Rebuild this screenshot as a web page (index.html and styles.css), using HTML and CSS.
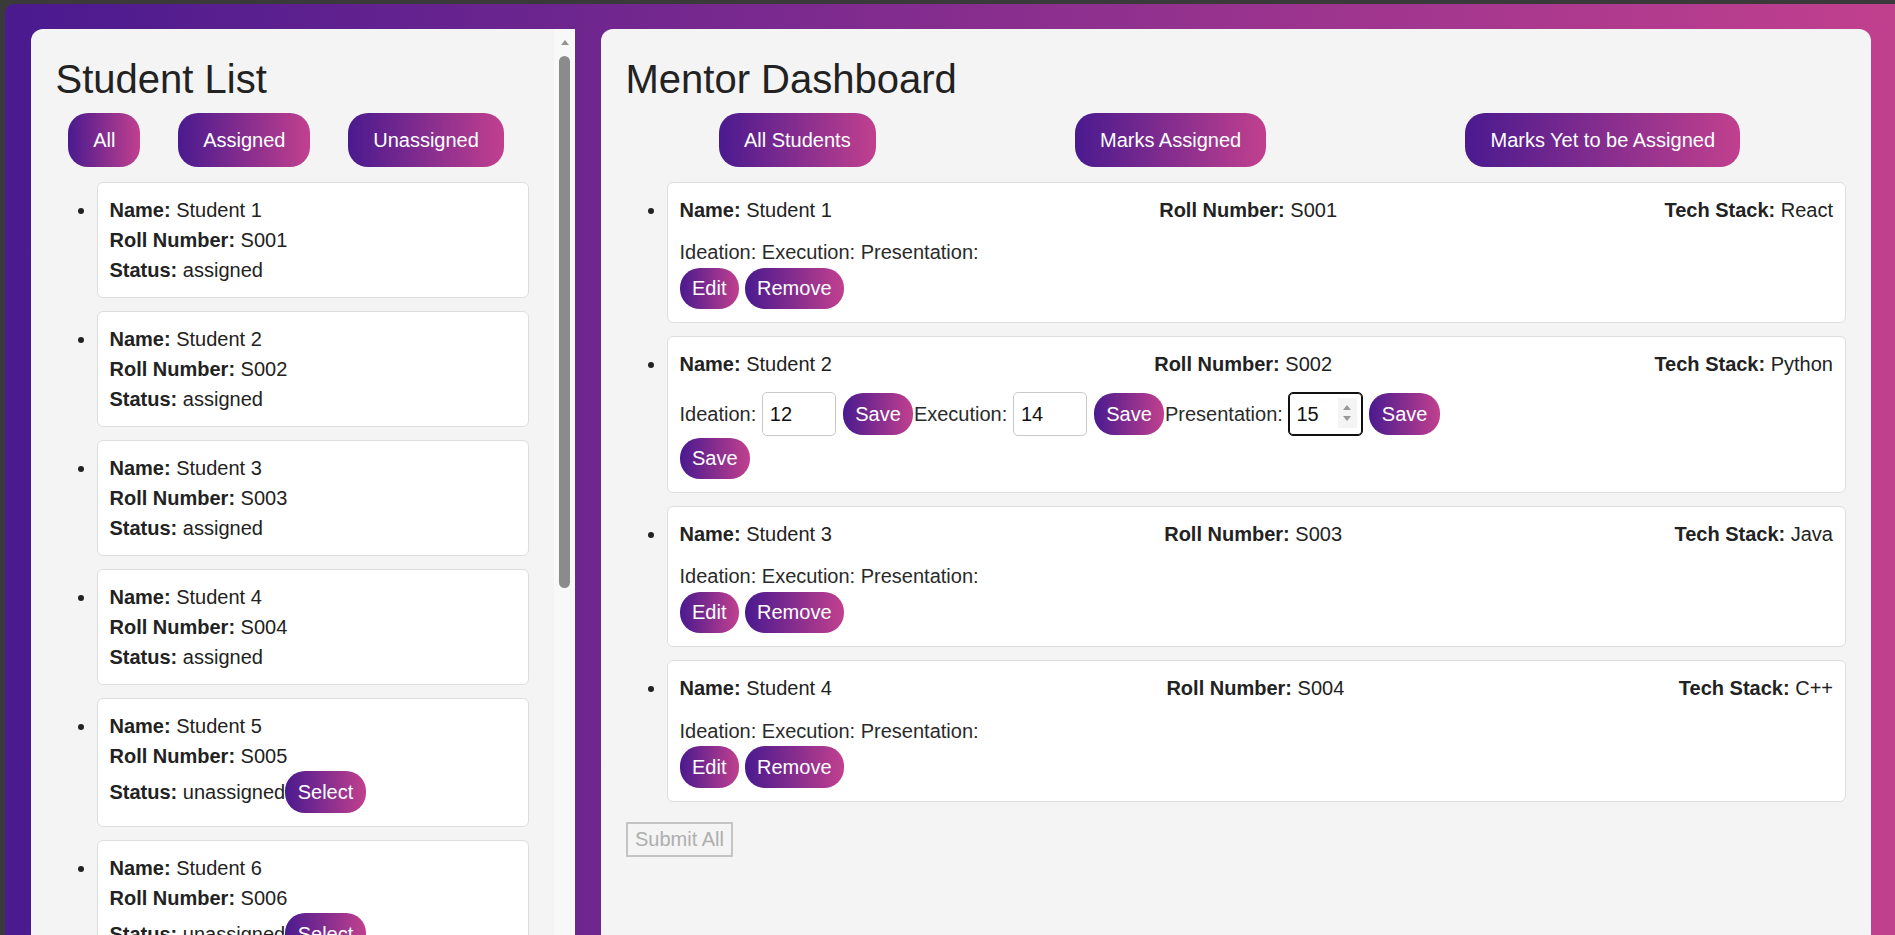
FILE: index.html
```html
<!DOCTYPE html>
<html lang="en">
<head>
<meta charset="utf-8">
<title>Mentor Dashboard</title>
<link rel="stylesheet" href="styles.css">
</head>
<body>
<div class="app">
  <section class="panel panel-students">
    <div class="student-scroll">
      <h2 class="panel-title">Student List</h2>
      <div class="filters">
        <button class="pill-btn">All</button>
        <button class="pill-btn">Assigned</button>
        <button class="pill-btn">Unassigned</button>
      </div>
      <ul class="card-list">
        <li><div class="card student-card">
          <div class="line"><b>Name:</b> Student 1</div>
          <div class="line"><b>Roll Number:</b> S001</div>
          <div class="line"><b>Status:</b> assigned</div>
        </div></li>
        <li><div class="card student-card">
          <div class="line"><b>Name:</b> Student 2</div>
          <div class="line"><b>Roll Number:</b> S002</div>
          <div class="line"><b>Status:</b> assigned</div>
        </div></li>
        <li><div class="card student-card">
          <div class="line"><b>Name:</b> Student 3</div>
          <div class="line"><b>Roll Number:</b> S003</div>
          <div class="line"><b>Status:</b> assigned</div>
        </div></li>
        <li><div class="card student-card">
          <div class="line"><b>Name:</b> Student 4</div>
          <div class="line"><b>Roll Number:</b> S004</div>
          <div class="line"><b>Status:</b> assigned</div>
        </div></li>
        <li><div class="card student-card">
          <div class="line"><b>Name:</b> Student 5</div>
          <div class="line"><b>Roll Number:</b> S005</div>
          <div class="line"><b>Status:</b> unassigned<button class="small-btn">Select</button></div>
        </div></li>
        <li><div class="card student-card">
          <div class="line"><b>Name:</b> Student 6</div>
          <div class="line"><b>Roll Number:</b> S006</div>
          <div class="line"><b>Status:</b> unassigned<button class="small-btn">Select</button></div>
        </div></li>
      </ul>
    </div>
    <div class="scrollbar" aria-hidden="true">
      <div class="scroll-up"></div>
      <div class="scroll-thumb"></div>
    </div>
  </section>

  <section class="panel panel-mentor">
    <h2 class="panel-title">Mentor Dashboard</h2>
    <div class="filters">
      <button class="pill-btn">All Students</button>
      <button class="pill-btn">Marks Assigned</button>
      <button class="pill-btn">Marks Yet to be Assigned</button>
    </div>
    <ul class="card-list">
      <li><div class="card mentor-card">
        <div class="info-row"><span><b>Name:</b> Student 1</span><span><b>Roll Number:</b> S001</span><span><b>Tech Stack:</b> React</span></div>
        <div class="marks">Ideation: Execution: Presentation:</div>
        <div class="actions"><button class="small-btn">Edit</button> <button class="small-btn">Remove</button></div>
      </div></li>
      <li><div class="card mentor-card">
        <div class="info-row"><span><b>Name:</b> Student 2</span><span><b>Roll Number:</b> S002</span><span><b>Tech Stack:</b> Python</span></div>
        <div class="mark-edit">
          <span class="mark-label">Ideation:</span><input class="mark-input" type="text" value="12"><button class="small-btn">Save</button>
          <span class="mark-label">Execution:</span><input class="mark-input" type="text" value="14"><button class="small-btn">Save</button>
          <span class="mark-label">Presentation:</span><span class="spin-wrap"><input class="mark-input is-focused" type="text" value="15"><span class="spinner"><i class="spin-up"></i><i class="spin-down"></i></span></span><button class="small-btn">Save</button>
        </div>
        <div class="actions"><button class="small-btn">Save</button></div>
      </div></li>
      <li><div class="card mentor-card">
        <div class="info-row"><span><b>Name:</b> Student 3</span><span><b>Roll Number:</b> S003</span><span><b>Tech Stack:</b> Java</span></div>
        <div class="marks">Ideation: Execution: Presentation:</div>
        <div class="actions"><button class="small-btn">Edit</button> <button class="small-btn">Remove</button></div>
      </div></li>
      <li><div class="card mentor-card">
        <div class="info-row"><span><b>Name:</b> Student 4</span><span><b>Roll Number:</b> S004</span><span><b>Tech Stack:</b> C++</span></div>
        <div class="marks">Ideation: Execution: Presentation:</div>
        <div class="actions"><button class="small-btn">Edit</button> <button class="small-btn">Remove</button></div>
      </div></li>
    </ul>
    <button class="submit-btn" disabled>Submit All</button>
  </section>
</div>
</body>
</html>
```

FILE: styles.css
```css
* {
  box-sizing: border-box;
}

html,
body {
  height: 935px;
}

body {
  margin: 0;
  background: #3a3a3a;
  font-family: "Liberation Sans", Arial, sans-serif;
  font-size: 20px;
  color: #222;
  overflow: hidden;
}

.app {
  display: grid;
  grid-template-columns: minmax(0, 3fr) minmax(0, 7fr);
  column-gap: 25.5px;
  height: 931px;
  margin: 4px 0 0 5px;
  padding: 25.3px 24px 0 25.5px;
  border-top-left-radius: 9px;
  background: linear-gradient(to right, #4a1a8f, #c1408e);
}

.panel {
  min-width: 0;
  height: 100%;
  background: #f4f4f4;
  overflow: hidden;
}

.panel-students {
  display: flex;
  border-radius: 12px 0 0 0;
}

.student-scroll {
  flex: 1 1 auto;
  min-width: 0;
  padding: 25px;
  overflow: hidden;
}

.scrollbar {
  flex: 0 0 21px;
  display: flex;
  flex-direction: column;
  align-items: center;
  background: #f8f8f8;
}

.scroll-up {
  width: 0;
  height: 0;
  margin-top: 11px;
  border-left: 4.5px solid transparent;
  border-right: 4.5px solid transparent;
  border-bottom: 5.5px solid #939393;
}

.scroll-thumb {
  width: 11px;
  height: 532px;
  margin-top: 11px;
  border-radius: 6px;
  background: #8b8b8b;
}

.panel-mentor {
  padding: 25px;
  border-radius: 12px 12px 0 0;
}

.panel-title {
  margin: 1.5px 0 11.5px;
  font-size: 40px;
  line-height: 46px;
  font-weight: normal;
  color: #222;
}

.filters {
  display: flex;
  justify-content: space-around;
  margin-bottom: 14.4px;
}

.pill-btn {
  margin: 0 12.5px 0 0;
  padding: 15.5px 25px;
  border: 0;
  border-radius: 20px;
  font-family: inherit;
  font-size: 20px;
  line-height: 23px;
  color: #fff;
  background: linear-gradient(to right, #4a1a8f, #c1408e);
  white-space: nowrap;
}

.card-list {
  margin: 0;
  padding: 0 0 0 41px;
}

.card-list li {
  margin-bottom: 13px;
}

.card {
  padding: 12px;
  background: #fff;
  border: 1px solid #dedede;
  border-radius: 6px;
  line-height: 30px;
}

.small-btn {
  margin: 0.75px 0;
  padding: 9.25px 12.5px;
  border: 0;
  border-radius: 20px;
  font-family: inherit;
  font-size: 20px;
  line-height: 23px;
  color: #fff;
  background: linear-gradient(to right, #4a1a8f, #c1408e);
}

.info-row {
  display: flex;
  justify-content: space-between;
  margin-bottom: 12.4px;
}

.marks {
  color: #2a2a2a;
}

.actions {
  line-height: 20px;
}

.actions .small-btn {
  vertical-align: top;
}

.mark-edit {
  display: flex;
  align-items: center;
  height: 45.3px;
  color: #2a2a2a;
}

.mark-edit .small-btn {
  margin: 0 0.6px 0 0;
}

.mark-input {
  width: 74.5px;
  height: 44px;
  margin: 0 6.4px 0 5.6px;
  padding: 0 7px;
  border: 1px solid #c9c9c9;
  border-radius: 5px;
  font-family: inherit;
  font-size: 20px;
  color: #111;
  background: #fff;
}

.spin-wrap {
  position: relative;
  display: inline-block;
  margin: 0 6.4px 0 5.6px;
  height: 44px;
}

.spin-wrap .mark-input {
  margin: 0;
  display: block;
}

.mark-input.is-focused {
  border-color: #101010;
  box-shadow: inset 0 0 0 1px #101010;
  outline: none;
}

.spinner {
  position: absolute;
  top: 6.3px;
  right: 6.3px;
  width: 19px;
  height: 30px;
  background: #f4f4f4;
  display: flex;
  flex-direction: column;
  align-items: center;
  justify-content: center;
  gap: 6px;
}

.spin-up,
.spin-down {
  display: block;
  width: 0;
  height: 0;
  border-left: 4px solid transparent;
  border-right: 4px solid transparent;
}

.spin-up {
  border-bottom: 5px solid #999;
}

.spin-down {
  border-top: 5px solid #999;
}

.submit-btn {
  margin-top: 7.5px;
  padding: 4px 7.5px;
  border: 2px solid #c4c4c4;
  border-radius: 1px;
  font-family: inherit;
  font-size: 20px;
  line-height: 23px;
  color: #aeaeae;
  background: #f4f4f4;
}
```
